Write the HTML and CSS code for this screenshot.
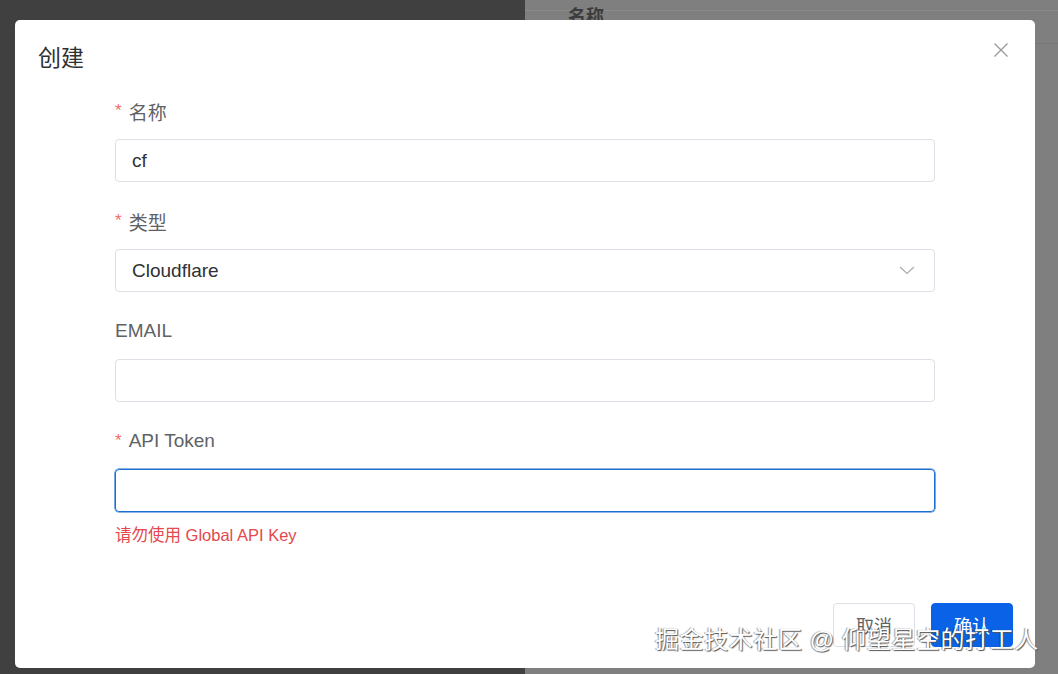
FILE: index.html
```html
<!DOCTYPE html>
<html lang="zh-CN">
<head>
    <meta charset="UTF-8">
    <title>创建</title>
    <link rel="stylesheet" href="styles.css">
</head>
<body>
    <div class="page">
        <div class="sidebar"></div>
        <div class="main">
            <div class="table-head">
                <div class="th">名称</div>
            </div>
        </div>
    </div>

    <div class="mask">
        <div class="dialog">
            <div class="dialog-header">
                <span class="dialog-title">创建</span>
                <button class="dialog-close" aria-label="关闭">
                    <svg width="16" height="16" viewBox="0 0 16 16"><path d="M1.5 1.5 L14.5 14.5 M14.5 1.5 L1.5 14.5" stroke="#9a9a9a" stroke-width="1.3" fill="none"/></svg>
                </button>
            </div>

            <form class="form">
                <div class="form-item">
                    <label class="form-label required">名称</label>
                    <div class="input">cf</div>
                </div>
                <div class="form-item">
                    <label class="form-label required">类型</label>
                    <div class="input select">
                        <span>Cloudflare</span>
                        <svg width="16" height="9" viewBox="0 0 16 9"><path d="M1 1 L8 7.5 L15 1" stroke="#a8abb2" stroke-width="1.2" fill="none"/></svg>
                    </div>
                </div>
                <div class="form-item">
                    <label class="form-label">EMAIL</label>
                    <div class="input"></div>
                </div>
                <div class="form-item">
                    <label class="form-label required">API Token</label>
                    <div class="input focused"></div>
                    <div class="form-error">请勿使用 Global API Key</div>
                </div>
            </form>

            <div class="dialog-footer">
                <button class="btn">取消</button>
                <button class="btn btn-primary">确认</button>
            </div>
        </div>
    </div>

    <div class="watermark">掘金技术社区 @ 仰望星空的打工人</div>
</body>
</html>
```

FILE: styles.css
```css
* {
    box-sizing: border-box;
}
body {
    margin: 0;
    width: 1058px;
    height: 674px;
    overflow: hidden;
    font-family: 'Liberation Sans', Arial, 'Noto Sans CJK SC', sans-serif;
    position: relative;
}
.page {
    display: flex;
    height: 674px;
}
.sidebar {
    width: 525px;
    background-color: #404040;
}
.main {
    flex: 1;
    background-color: #7f7f7f;
    padding-top: 10px;
}
.table-head {
    border-top: 1px solid #8a8a8a;
    border-bottom: 1px solid #767676;
    height: 34px;
    padding-left: 43px;
}
.th {
    font-size: 18px;
    font-weight: bold;
    color: #3c3c3c;
    line-height: 12px;
}
.mask {
    position: absolute;
    top: 0;
    left: 0;
    width: 100%;
    height: 100%;
}
.dialog {
    position: absolute;
    left: 15px;
    top: 20px;
    width: 1020px;
    height: 648px;
    background: #fff;
    border-radius: 5px;
    display: flex;
    flex-direction: column;
    padding: 23px 22px 21px 23px;
}
.dialog-header {
    display: flex;
    align-items: flex-start;
    height: 30px;
}
.dialog-title {
    font-size: 23px;
    line-height: 30px;
    color: #303133;
}
.dialog-close {
    position: absolute;
    top: 22px;
    right: 26px;
    border: none;
    background: none;
    padding: 0;
    cursor: pointer;
}
.form {
    margin: 24px 78px 0 77px;
    display: flex;
    flex-direction: column;
    gap: 25px;
}
.form-label {
    display: flex;
    align-items: center;
    height: 28px;
    font-size: 19px;
    color: #606266;
    margin-bottom: 14px;
}
.form-label.required::before {
    content: '*';
    color: #f56c6c;
    margin-right: 7px;
    font-size: 17px;
}
.input {
    height: 43px;
    border: 1px solid #dcdfe6;
    border-radius: 4px;
    padding: 0 16px;
    display: flex;
    align-items: center;
    font-size: 19px;
    color: #303133;
}
.select {
    justify-content: space-between;
    padding-right: 19px;
}
.input.focused {
    border-color: #1b6fd2;
    box-shadow: 0 0 0 0.6px #1b6fd2;
}
.form-error {
    margin-top: 12px;
    height: 22px;
    font-size: 16.5px;
    line-height: 22px;
    color: #e5484d;
}
.dialog-footer {
    margin-top: auto;
    display: flex;
    justify-content: flex-end;
    gap: 16px;
}
.btn {
    width: 82px;
    height: 44px;
    border: 1px solid #dcdfe6;
    border-radius: 4px;
    background: #fff;
    color: #606266;
    font-family: inherit;
    font-size: 18px;
    cursor: pointer;
}
.btn-primary {
    background: #0a63e6;
    border-color: #0a63e6;
    color: #fff;
}
.watermark {
    position: absolute;
    left: 655px;
    top: 624px;
    font-size: 24px;
    line-height: 32px;
    color: #fff;
    white-space: nowrap;
    text-shadow: 1px 1px 1px #555, -1px 0 1px rgba(0,0,0,0.4);
    letter-spacing: 0.6px;
}
```
